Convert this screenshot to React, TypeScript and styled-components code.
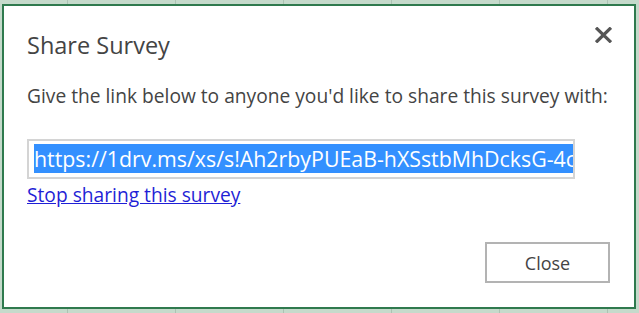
import React from "react";
import styled, { createGlobalStyle } from "styled-components";

const Global = createGlobalStyle`
  html, body { margin: 0; padding: 0; }
  body {
    width: 639px;
    height: 313px;
    overflow: hidden;
    background-color: #c5dacb;
    background-image:
      linear-gradient(to right, rgba(150, 175, 158, 0.55) 1px, transparent 1px);
    background-size: 108px 100%;
    background-position: 67px 0;
    font-family: "Open Sans", "Noto Sans", sans-serif;
  }
`;

const Dialog = styled.div`
  box-sizing: border-box;
  margin: 4px 0 0 2px;
  width: 634px;
  height: 305px;
  background: #ffffff;
  border: 2px solid #2f7a4e;
  padding: 0 25px 0 23px;
  display: flex;
  flex-direction: column;
`;

const Header = styled.div`
  display: flex;
  justify-content: space-between;
  align-items: flex-start;
  padding-top: 24px;
  height: 30px;
`;

const Title = styled.h1`
  margin: 0;
  font-weight: 400;
  font-size: 23.5px;
  line-height: 30px;
  color: #444444;
`;

const CloseX = styled.button`
  border: none;
  background: none;
  padding: 0;
  margin: -3px -3px 0 0;
  width: 17px;
  height: 16px;
  cursor: pointer;
  display: flex;
`;

const Message = styled.p`
  margin: 23px 0 0;
  font-size: 19.2px;
  line-height: 26px;
  color: #444444;
  white-space: nowrap;
`;

const LinkBox = styled.div`
  box-sizing: border-box;
  margin-top: 30px;
  width: 548px;
  height: 40px;
  border: 2px solid #d4d4d4;
  padding: 3px 2px 0 5px;
  overflow: hidden;
  white-space: nowrap;
`;

const Selected = styled.span`
  display: inline-block;
  background: #3390ff;
  color: #ffffff;
  font-size: 21.35px;
  line-height: 29px;
`;

const StopLink = styled.a`
  margin-top: 3px;
  align-self: flex-start;
  font-size: 19.2px;
  line-height: 26px;
  color: #1f1fd6;
  text-decoration: underline;
  cursor: pointer;
`;

const Footer = styled.div`
  margin-top: auto;
  margin-bottom: 24px;
  display: flex;
  justify-content: flex-end;
`;

const Button = styled.button`
  box-sizing: border-box;
  width: 125px;
  height: 41px;
  margin-right: -1px;
  background: #ffffff;
  border: 2px solid #b3b3b3;
  font-family: "Open Sans", "Noto Sans", sans-serif;
  font-size: 18px;
  color: #444444;
  cursor: pointer;
`;

export default function App() {
  return (
    <>
      <Global />
      <Dialog>
        <Header>
          <Title>Share Survey</Title>
          <CloseX aria-label="Close">
            <svg width="17" height="16" viewBox="0 0 17 16">
              <path d="M2.2 1.8 L14.8 14.2 M14.8 1.8 L2.2 14.2" stroke="#555555" strokeWidth="3.2" strokeLinecap="square" />
            </svg>
          </CloseX>
        </Header>
        <Message>Give the link below to anyone you'd like to share this survey with:</Message>
        <LinkBox>
          <Selected>https://1drv.ms/xs/s!Ah2rbyPUEaB-hXSstbMhDcksG-4cMqZ8wLp</Selected>
        </LinkBox>
        <StopLink>Stop sharing this survey</StopLink>
        <Footer>
          <Button>Close</Button>
        </Footer>
      </Dialog>
    </>
  );
}
